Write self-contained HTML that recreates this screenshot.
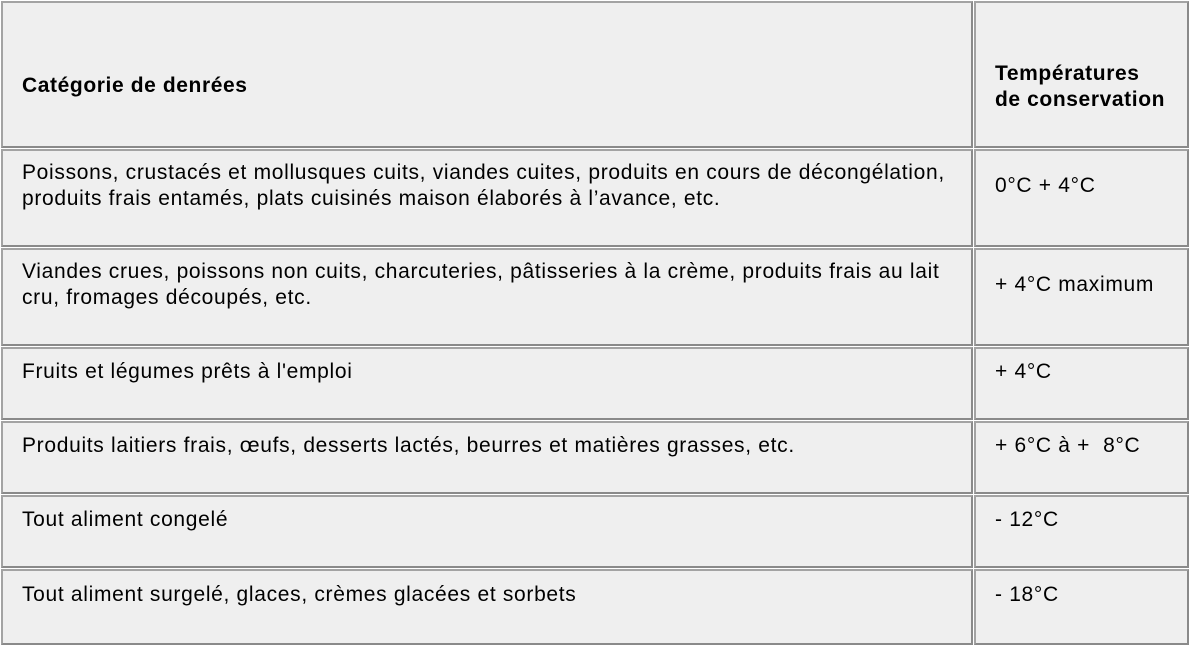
<!DOCTYPE html>
<html><head><meta charset="utf-8"><style>
body{margin:0;width:1192px;height:648px;background:#fff;position:relative;overflow:hidden;font-family:"Liberation Sans",Arial,sans-serif;font-size:21px;letter-spacing:0.68px;color:#000}
.c{position:absolute;box-sizing:border-box;border:2px solid #a3a3a3;border-right-color:#8a8a8a;border-bottom-color:#8a8a8a;background:#efefef}
.t{position:absolute;line-height:26px;white-space:nowrap}
b{font-weight:bold;letter-spacing:0.6px}
</style></head><body>
<div class="c" style="left:1px;top:1px;width:972px;height:147px"></div>
<div class="c" style="left:974px;top:1px;width:215px;height:147px"></div>
<div class="c" style="left:1px;top:149px;width:972px;height:98px"></div>
<div class="c" style="left:974px;top:149px;width:215px;height:98px"></div>
<div class="c" style="left:1px;top:248px;width:972px;height:98px"></div>
<div class="c" style="left:974px;top:248px;width:215px;height:98px"></div>
<div class="c" style="left:1px;top:347px;width:972px;height:73px"></div>
<div class="c" style="left:974px;top:347px;width:215px;height:73px"></div>
<div class="c" style="left:1px;top:421px;width:972px;height:73px"></div>
<div class="c" style="left:974px;top:421px;width:215px;height:73px"></div>
<div class="c" style="left:1px;top:495px;width:972px;height:73px"></div>
<div class="c" style="left:974px;top:495px;width:215px;height:73px"></div>
<div class="c" style="left:1px;top:569px;width:972px;height:76px"></div>
<div class="c" style="left:974px;top:569px;width:215px;height:76px"></div>

<div class="t" style="left:22px;top:73px"><b>Catégorie de denrées</b></div>
<div class="t" style="left:995px;top:61px"><b>Températures<br>de conservation</b></div>

<div class="t" style="left:22px;top:160px">Poissons, crustacés et mollusques cuits, viandes cuites, produits en cours de décongélation,<br>produits frais entamés, plats cuisinés maison élaborés à l’avance, etc.</div>
<div class="t" style="left:995px;top:173px">0°C + 4°C</div>

<div class="t" style="left:22px;top:259px">Viandes crues, poissons non cuits, charcuteries, pâtisseries à la crème, produits frais au lait<br>cru, fromages découpés, etc.</div>
<div class="t" style="left:995px;top:272px">+ 4°C maximum</div>

<div class="t" style="left:22px;top:359px">Fruits et légumes prêts à l'emploi</div>
<div class="t" style="left:995px;top:359px">+ 4°C</div>

<div class="t" style="left:22px;top:433px">Produits laitiers frais, œufs, desserts lactés, beurres et matières grasses, etc.</div>
<div class="t" style="left:995px;top:433px">+ 6°C à + &nbsp;8°C</div>

<div class="t" style="left:22px;top:507px">Tout aliment congelé</div>
<div class="t" style="left:995px;top:507px">- 12°C</div>

<div class="t" style="left:22px;top:582px">Tout aliment surgelé, glaces, crèmes glacées et sorbets</div>
<div class="t" style="left:995px;top:582px">- 18°C</div>
</body></html>
